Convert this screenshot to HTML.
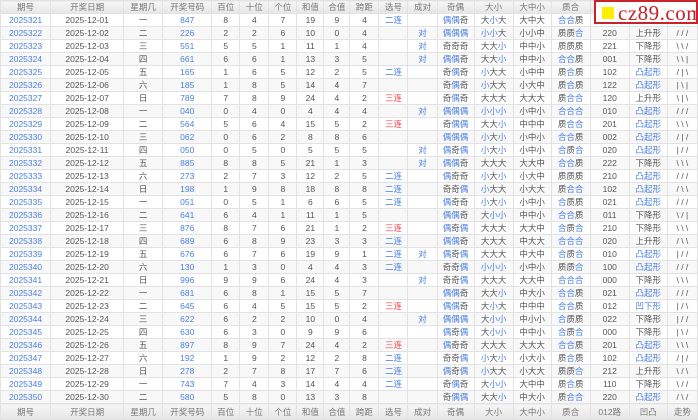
<!DOCTYPE html>
<html><head><meta charset="utf-8"><style>
*{margin:0;padding:0;box-sizing:border-box}
body{width:698px;height:419px;overflow:hidden;background:#fff;font-family:"Liberation Sans","Noto Sans CJK SC",sans-serif;font-size:8.5px;color:#555;position:relative}
table{border-collapse:collapse;table-layout:fixed;width:698px}
td,th{border:1px solid #e2e2e2;text-align:center;height:13px;line-height:12px;padding:0;white-space:nowrap;overflow:hidden;font-weight:normal}
th{background:linear-gradient(#f6f6f6,#e6e6e6);color:#777}
tr.f th{height:16px}
tr:nth-child(odd) td{background:#f8f8f8}
td:nth-child(1),td:nth-child(4){color:#4a7fe0}
u{text-decoration:none;color:#4a7fe0}
em{font-style:normal;color:#e5484d}
#logo{position:absolute;left:594px;top:0;width:104px;height:24px;background:#fff;border:2px solid #c8222a;}
#logo i{position:absolute;left:6px;top:5px;width:12px;height:12px;background:#ffee00}
#logo span{position:absolute;left:22px;top:-1px;font-family:"Liberation Serif",serif;font-size:21px;color:#c8222a;letter-spacing:.5px}
</style></head><body>
<table>
<colgroup><col style="width:50px"><col style="width:73px"><col style="width:39px"><col style="width:49px"><col style="width:28px"><col style="width:29px"><col style="width:28px"><col style="width:27px"><col style="width:26px"><col style="width:29px"><col style="width:29px"><col style="width:29px"><col style="width:37px"><col style="width:39px"><col style="width:38px"><col style="width:39px"><col style="width:39px"><col style="width:38px"><col style="width:30px"></colgroup>
<tr><th>期号</th><th>开奖日期</th><th>星期几</th><th>开奖号码</th><th>百位</th><th>十位</th><th>个位</th><th>和值</th><th>合值</th><th>跨距</th><th>选号</th><th>成对</th><th>奇偶</th><th>大小</th><th>大中小</th><th>质合</th><th>012路</th><th>凹凸</th><th>走势</th></tr>
<tr><td>2025321</td><td>2025-12-01</td><td>一</td><td>847</td><td>8</td><td>4</td><td>7</td><td>19</td><td>9</td><td>4</td><td><u>二连</u></td><td></td><td><u>偶偶</u>奇</td><td>大<u>小</u>大</td><td>大中大</td><td><u>合合</u>质</td><td>211</td><td><u>凹下形</u></td><td>\ \ \</td></tr>
<tr><td>2025322</td><td>2025-12-02</td><td>二</td><td>226</td><td>2</td><td>2</td><td>6</td><td>10</td><td>0</td><td>4</td><td></td><td><u>对</u></td><td><u>偶偶偶</u></td><td><u>小小</u>大</td><td>小小中</td><td>质质<u>合</u></td><td>220</td><td>上升形</td><td>/ / /</td></tr>
<tr><td>2025323</td><td>2025-12-03</td><td>三</td><td>551</td><td>5</td><td>5</td><td>1</td><td>11</td><td>1</td><td>4</td><td></td><td><u>对</u></td><td>奇奇奇</td><td>大大<u>小</u></td><td>中中小</td><td>质质质</td><td>221</td><td>下降形</td><td>\ \ /</td></tr>
<tr><td>2025324</td><td>2025-12-04</td><td>四</td><td>661</td><td>6</td><td>6</td><td>1</td><td>13</td><td>3</td><td>5</td><td></td><td><u>对</u></td><td><u>偶偶</u>奇</td><td>大大<u>小</u></td><td>中中小</td><td><u>合合</u>质</td><td>001</td><td>下降形</td><td>\ \ |</td></tr>
<tr><td>2025325</td><td>2025-12-05</td><td>五</td><td>165</td><td>1</td><td>6</td><td>5</td><td>12</td><td>2</td><td>5</td><td><u>二连</u></td><td></td><td>奇<u>偶</u>奇</td><td><u>小</u>大大</td><td>小中中</td><td>质<u>合</u>质</td><td>102</td><td><u>凸起形</u></td><td>/ | \</td></tr>
<tr><td>2025326</td><td>2025-12-06</td><td>六</td><td>185</td><td>1</td><td>8</td><td>5</td><td>14</td><td>4</td><td>7</td><td></td><td></td><td>奇<u>偶</u>奇</td><td><u>小</u>大大</td><td>小大中</td><td>质<u>合</u>质</td><td>122</td><td><u>凸起形</u></td><td>| \ |</td></tr>
<tr><td>2025327</td><td>2025-12-07</td><td>日</td><td>789</td><td>7</td><td>8</td><td>9</td><td>24</td><td>4</td><td>2</td><td><em>三连</em></td><td></td><td>奇<u>偶</u>奇</td><td>大大大</td><td>大大大</td><td>质<u>合合</u></td><td>120</td><td>上升形</td><td>\ | \</td></tr>
<tr><td>2025328</td><td>2025-12-08</td><td>一</td><td>040</td><td>0</td><td>4</td><td>0</td><td>4</td><td>4</td><td>4</td><td></td><td><u>对</u></td><td><u>偶偶偶</u></td><td><u>小小小</u></td><td>小中小</td><td><u>合合合</u></td><td>010</td><td><u>凸起形</u></td><td>/ / /</td></tr>
<tr><td>2025329</td><td>2025-12-09</td><td>二</td><td>564</td><td>5</td><td>6</td><td>4</td><td>15</td><td>5</td><td>2</td><td><em>三连</em></td><td></td><td>奇<u>偶偶</u></td><td>大大<u>小</u></td><td>中中中</td><td>质<u>合合</u></td><td>201</td><td><u>凸起形</u></td><td>\ \ \</td></tr>
<tr><td>2025330</td><td>2025-12-10</td><td>三</td><td>062</td><td>0</td><td>6</td><td>2</td><td>8</td><td>8</td><td>6</td><td></td><td></td><td><u>偶偶偶</u></td><td><u>小</u>大<u>小</u></td><td>小中小</td><td><u>合合</u>质</td><td>002</td><td><u>凸起形</u></td><td>/ | /</td></tr>
<tr><td>2025331</td><td>2025-12-11</td><td>四</td><td>050</td><td>0</td><td>5</td><td>0</td><td>5</td><td>5</td><td>5</td><td></td><td><u>对</u></td><td><u>偶</u>奇<u>偶</u></td><td><u>小</u>大<u>小</u></td><td>小中小</td><td><u>合</u>质<u>合</u></td><td>020</td><td><u>凸起形</u></td><td>| / /</td></tr>
<tr><td>2025332</td><td>2025-12-12</td><td>五</td><td>885</td><td>8</td><td>8</td><td>5</td><td>21</td><td>1</td><td>3</td><td></td><td><u>对</u></td><td><u>偶偶</u>奇</td><td>大大大</td><td>大大中</td><td><u>合合</u>质</td><td>222</td><td>下降形</td><td>\ \ \</td></tr>
<tr><td>2025333</td><td>2025-12-13</td><td>六</td><td>273</td><td>2</td><td>7</td><td>3</td><td>12</td><td>2</td><td>5</td><td><u>二连</u></td><td></td><td><u>偶</u>奇奇</td><td><u>小</u>大<u>小</u></td><td>小大中</td><td>质质质</td><td>210</td><td><u>凸起形</u></td><td>/ / /</td></tr>
<tr><td>2025334</td><td>2025-12-14</td><td>日</td><td>198</td><td>1</td><td>9</td><td>8</td><td>18</td><td>8</td><td>8</td><td><u>二连</u></td><td></td><td>奇奇<u>偶</u></td><td><u>小</u>大大</td><td>小大大</td><td>质<u>合合</u></td><td>102</td><td><u>凸起形</u></td><td>/ \ \</td></tr>
<tr><td>2025335</td><td>2025-12-15</td><td>一</td><td>051</td><td>0</td><td>5</td><td>1</td><td>6</td><td>6</td><td>5</td><td><u>二连</u></td><td></td><td><u>偶</u>奇奇</td><td><u>小</u>大<u>小</u></td><td>小中小</td><td><u>合</u>质质</td><td>021</td><td><u>凸起形</u></td><td>/ / /</td></tr>
<tr><td>2025336</td><td>2025-12-16</td><td>二</td><td>641</td><td>6</td><td>4</td><td>1</td><td>11</td><td>1</td><td>5</td><td></td><td></td><td><u>偶偶</u>奇</td><td>大<u>小小</u></td><td>中中小</td><td><u>合合</u>质</td><td>011</td><td>下降形</td><td>\ / |</td></tr>
<tr><td>2025337</td><td>2025-12-17</td><td>三</td><td>876</td><td>8</td><td>7</td><td>6</td><td>21</td><td>1</td><td>2</td><td><em>三连</em></td><td></td><td><u>偶</u>奇<u>偶</u></td><td>大大大</td><td>大大中</td><td><u>合</u>质<u>合</u></td><td>210</td><td>下降形</td><td>\ \ \</td></tr>
<tr><td>2025338</td><td>2025-12-18</td><td>四</td><td>689</td><td>6</td><td>8</td><td>9</td><td>23</td><td>3</td><td>3</td><td><u>二连</u></td><td></td><td><u>偶偶</u>奇</td><td>大大大</td><td>中大大</td><td><u>合合合</u></td><td>020</td><td>上升形</td><td>/ \ \</td></tr>
<tr><td>2025339</td><td>2025-12-19</td><td>五</td><td>676</td><td>6</td><td>7</td><td>6</td><td>19</td><td>9</td><td>1</td><td><u>二连</u></td><td><u>对</u></td><td><u>偶</u>奇<u>偶</u></td><td>大大大</td><td>中大中</td><td><u>合</u>质<u>合</u></td><td>010</td><td><u>凸起形</u></td><td>| / /</td></tr>
<tr><td>2025340</td><td>2025-12-20</td><td>六</td><td>130</td><td>1</td><td>3</td><td>0</td><td>4</td><td>4</td><td>3</td><td><u>二连</u></td><td></td><td>奇奇<u>偶</u></td><td><u>小小小</u></td><td>小中小</td><td>质质<u>合</u></td><td>100</td><td><u>凸起形</u></td><td>/ / /</td></tr>
<tr><td>2025341</td><td>2025-12-21</td><td>日</td><td>996</td><td>9</td><td>9</td><td>6</td><td>24</td><td>4</td><td>3</td><td></td><td><u>对</u></td><td>奇奇<u>偶</u></td><td>大大大</td><td>大大中</td><td><u>合合合</u></td><td>000</td><td>下降形</td><td>\ \ \</td></tr>
<tr><td>2025342</td><td>2025-12-22</td><td>一</td><td>681</td><td>6</td><td>8</td><td>1</td><td>15</td><td>5</td><td>7</td><td></td><td></td><td><u>偶偶</u>奇</td><td>大大<u>小</u></td><td>中大小</td><td><u>合合</u>质</td><td>021</td><td><u>凸起形</u></td><td>/ / /</td></tr>
<tr><td>2025343</td><td>2025-12-23</td><td>二</td><td>645</td><td>6</td><td>4</td><td>5</td><td>15</td><td>5</td><td>2</td><td><em>三连</em></td><td></td><td><u>偶偶</u>奇</td><td>大<u>小</u>大</td><td>中中中</td><td><u>合合</u>质</td><td>012</td><td><u>凹下形</u></td><td>| / \</td></tr>
<tr><td>2025344</td><td>2025-12-24</td><td>三</td><td>622</td><td>6</td><td>2</td><td>2</td><td>10</td><td>0</td><td>4</td><td></td><td><u>对</u></td><td><u>偶偶偶</u></td><td>大<u>小小</u></td><td>中小小</td><td><u>合</u>质质</td><td>022</td><td>下降形</td><td>| / /</td></tr>
<tr><td>2025345</td><td>2025-12-25</td><td>四</td><td>630</td><td>6</td><td>3</td><td>0</td><td>9</td><td>9</td><td>6</td><td></td><td></td><td><u>偶</u>奇<u>偶</u></td><td>大<u>小小</u></td><td>中中小</td><td><u>合</u>质<u>合</u></td><td>000</td><td>下降形</td><td>| \ /</td></tr>
<tr><td>2025346</td><td>2025-12-26</td><td>五</td><td>897</td><td>8</td><td>9</td><td>7</td><td>24</td><td>4</td><td>2</td><td><em>三连</em></td><td></td><td><u>偶</u>奇奇</td><td>大大大</td><td>大大大</td><td><u>合合</u>质</td><td>201</td><td><u>凸起形</u></td><td>\ \ \</td></tr>
<tr><td>2025347</td><td>2025-12-27</td><td>六</td><td>192</td><td>1</td><td>9</td><td>2</td><td>12</td><td>2</td><td>8</td><td><u>二连</u></td><td></td><td>奇奇<u>偶</u></td><td><u>小</u>大<u>小</u></td><td>小大小</td><td>质<u>合</u>质</td><td>102</td><td><u>凸起形</u></td><td>/ | /</td></tr>
<tr><td>2025348</td><td>2025-12-28</td><td>日</td><td>278</td><td>2</td><td>7</td><td>8</td><td>17</td><td>7</td><td>6</td><td><u>二连</u></td><td></td><td><u>偶</u>奇<u>偶</u></td><td><u>小</u>大大</td><td>小大大</td><td>质质<u>合</u></td><td>212</td><td>上升形</td><td>\ / \</td></tr>
<tr><td>2025349</td><td>2025-12-29</td><td>一</td><td>743</td><td>7</td><td>4</td><td>3</td><td>14</td><td>4</td><td>4</td><td><u>二连</u></td><td></td><td>奇<u>偶</u>奇</td><td>大<u>小小</u></td><td>大中中</td><td>质<u>合</u>质</td><td>110</td><td>下降形</td><td>\ / /</td></tr>
<tr><td>2025350</td><td>2025-12-30</td><td>二</td><td>580</td><td>5</td><td>8</td><td>0</td><td>13</td><td>3</td><td>8</td><td></td><td></td><td>奇<u>偶偶</u></td><td>大大<u>小</u></td><td>中大小</td><td>质<u>合合</u></td><td>220</td><td><u>凸起形</u></td><td>/ \ /</td></tr>
<tr class="f"><th>期号</th><th>开奖日期</th><th>星期几</th><th>开奖号码</th><th>百位</th><th>十位</th><th>个位</th><th>和值</th><th>合值</th><th>跨距</th><th>选号</th><th>成对</th><th>奇偶</th><th>大小</th><th>大中小</th><th>质合</th><th>012路</th><th>凹凸</th><th>走势</th></tr>
</table>
<div id="logo"><i></i><span>cz89.com</span></div>
</body></html>
